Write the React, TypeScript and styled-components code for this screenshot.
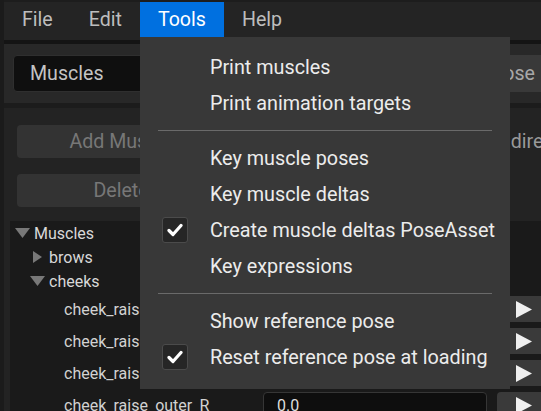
import React from "react";
import styled, { createGlobalStyle } from "styled-components";

const GlobalStyle = createGlobalStyle`
  html, body {
    margin: 0;
    padding: 0;
    background: #1b1b1b;
    overflow: hidden;
  }
  body {
    font-family: Roboto, "Noto Sans", "Liberation Sans", sans-serif;
  }
  * { box-sizing: border-box; }
`;

const Window = styled.div`
  width: 553px;
  height: 411px;
  margin-left: 4px;
  display: flex;
  flex-direction: column;
  background: #232323;
`;

/* ---------- menu bar ---------- */

const MenuBar = styled.div`
  height: 40px;
  display: flex;
  align-items: flex-start;
  border-top: 2px solid #1d1d1d;
  background: #242424;
  position: relative;
  z-index: 10;
`;

const MenuTitle = styled.div<{ $open?: boolean }>`
  position: relative;
  height: 35px;
  padding: 0 18px;
  display: flex;
  align-items: center;
  font-size: 19.6px;
  color: ${(p) => (p.$open ? "#ffffff" : "#bdbdbd")};
  background: ${(p) => (p.$open ? "#0070e0" : "transparent")};
`;

const Dropdown = styled.div`
  position: absolute;
  top: 100%;
  left: 0;
  width: 370px;
  padding: 12px 0 14px;
  background: #383838;
  display: flex;
  flex-direction: column;
`;

const MenuItem = styled.div`
  height: 36px;
  display: flex;
  align-items: center;
  padding-left: 22px;
  font-size: 19.8px;
  color: #ececec;
  white-space: nowrap;
`;

const CheckSlot = styled.div`
  width: 26px;
  height: 26px;
  margin-right: 22px;
  flex: none;
`;

const CheckBox = styled(CheckSlot)`
  border: 1px solid #4b4b4b;
  border-radius: 3px;
  background: #262626;
  display: flex;
  align-items: center;
  justify-content: center;
`;

const MenuSeparator = styled.div`
  height: 19px;
  padding: 9px 18px 0;
  &::after {
    content: "";
    display: block;
    height: 1px;
    background: #6a6a6a;
  }
`;

/* ---------- panel header ---------- */

const Rule = styled.div<{ $h: number; $c: string }>`
  height: ${(p) => p.$h}px;
  background: ${(p) => p.$c};
  flex: none;
`;

const Header = styled.div`
  height: 59px;
  display: flex;
  align-items: center;
  gap: 10px;
  padding: 0 8px 0 9px;
  background: #282828;
`;

const Combo = styled.div`
  flex: 1;
  height: 37px;
  display: flex;
  align-items: center;
  padding-left: 16px;
  border: 1px solid #2f2f2f;
  border-radius: 4px;
  background: #0f0f0f;
  font-size: 19.6px;
  color: #c4c4c4;
`;

const HeaderButton = styled.div`
  height: 37px;
  padding: 0 14px;
  display: flex;
  align-items: center;
  border-radius: 4px;
  background: #393939;
  font-size: 19.6px;
  color: #a8a8a8;
  white-space: nowrap;
`;

/* ---------- actions ---------- */

const Actions = styled.div`
  display: grid;
  grid-template-columns: 208px 1fr;
  column-gap: 16px;
  row-gap: 16px;
  padding: 17px 10px 14px 13px;
`;

const ActionButton = styled.div`
  height: 33px;
  display: flex;
  align-items: center;
  justify-content: center;
  border-radius: 4px;
  background: #333333;
  font-size: 19.6px;
  color: #777777;
`;

const Option = styled.div`
  display: flex;
  align-items: center;
  gap: 10px;
  padding-left: 176px;
  font-size: 19.6px;
  color: #999999;
  white-space: nowrap;
`;

const OptionBox = styled.div`
  width: 26px;
  height: 26px;
  flex: none;
  border: 1px solid #3a3a3a;
  border-radius: 3px;
  background: #1a1a1a;
`;

/* ---------- muscle tree ---------- */

const Tree = styled.div`
  flex: 1;
  margin-left: 6px;
  background: #1a1a1a;
  overflow: hidden;
`;

const TreeRow = styled.div<{ $depth: number }>`
  height: 24px;
  display: flex;
  align-items: center;
  padding-left: ${(p) => 5 + p.$depth * 15}px;
  font-size: 16px;
  color: #d8d8d8;
`;

const Toggle = styled.div`
  width: 15px;
  margin-right: 4px;
  display: flex;
  justify-content: center;
  align-items: center;
`;

const LeafRow = styled.div<{ $depth: number }>`
  height: 32px;
  display: grid;
  grid-template-columns: 189px 224px 54px;
  column-gap: 10px;
  align-items: center;
  padding-left: ${(p) => 5 + p.$depth * 15 + 19}px;
  font-size: 16px;
  color: #d2d2d2;
`;

const LeafLabel = styled.div`
  white-space: nowrap;
  overflow: hidden;
`;

const ValueField = styled.div`
  height: 26px;
  display: flex;
  align-items: center;
  padding-left: 13px;
  border: 1px solid #363636;
  border-radius: 4px;
  background: #0e0e0e;
  color: #dddddd;
`;

const PlayButton = styled.div`
  height: 26px;
  display: flex;
  align-items: center;
  justify-content: center;
  border-radius: 4px;
  background: #3a3a3a;
`;

const Check = () => (
  <svg width="16" height="14" viewBox="0 0 16 14">
    <polyline
      points="2,7.5 6,11.5 14,2.5"
      fill="none"
      stroke="#ffffff"
      strokeWidth="3.2"
      strokeLinecap="round"
      strokeLinejoin="round"
    />
  </svg>
);

const Expanded = () => (
  <svg width="15" height="10" viewBox="0 0 15 10">
    <polygon points="0,0 15,0 7.5,10" fill="#787878" />
  </svg>
);

const Collapsed = () => (
  <svg width="9" height="12" viewBox="0 0 9 12">
    <polygon points="0,0 9,6 0,12" fill="#787878" />
  </svg>
);

const Play = () => (
  <svg width="16" height="17" viewBox="0 0 16 17">
    <polygon points="0,0 16,8.5 0,17" fill="#f0f0f0" />
  </svg>
);

type Entry = { label: string; checked?: boolean } | "sep";

const toolsMenu: Entry[] = [
  { label: "Print muscles" },
  { label: "Print animation targets" },
  "sep",
  { label: "Key muscle poses" },
  { label: "Key muscle deltas" },
  { label: "Create muscle deltas PoseAsset", checked: true },
  { label: "Key expressions" },
  "sep",
  { label: "Show reference pose" },
  { label: "Reset reference pose at loading", checked: true },
];

const cheekMuscles = [
  "cheek_raise_inner_L",
  "cheek_raise_inner_R",
  "cheek_raise_outer_L",
  "cheek_raise_outer_R",
];

export default function App() {
  return (
    <>
      <GlobalStyle />
      <Window>
        <MenuBar>
          <MenuTitle>File</MenuTitle>
          <MenuTitle>Edit</MenuTitle>
          <MenuTitle $open>
            Tools
            <Dropdown>
              {toolsMenu.map((e, i) =>
                e === "sep" ? (
                  <MenuSeparator key={i} />
                ) : (
                  <MenuItem key={i}>
                    {e.checked ? (
                      <CheckBox>
                        <Check />
                      </CheckBox>
                    ) : (
                      <CheckSlot />
                    )}
                    {e.label}
                  </MenuItem>
                )
              )}
            </Dropdown>
          </MenuTitle>
          <MenuTitle>Help</MenuTitle>
        </MenuBar>

        <Rule $h={4} $c="#141414" />
        <Header>
          <Combo>Muscles</Combo>
          <HeaderButton>Reset pose</HeaderButton>
        </Header>
        <Rule $h={5} $c="#1c1c1c" />

        <Actions>
          <ActionButton>Add Muscle</ActionButton>
          <Option>
            <OptionBox />
            Mirror direction
          </Option>
          <ActionButton>Delete</ActionButton>
        </Actions>

        <Tree>
          <TreeRow $depth={0}>
            <Toggle>
              <Expanded />
            </Toggle>
            Muscles
          </TreeRow>
          <TreeRow $depth={1}>
            <Toggle>
              <Collapsed />
            </Toggle>
            brows
          </TreeRow>
          <TreeRow $depth={1}>
            <Toggle>
              <Expanded />
            </Toggle>
            cheeks
          </TreeRow>
          {cheekMuscles.map((name) => (
            <LeafRow key={name} $depth={2}>
              <LeafLabel>{name}</LeafLabel>
              <ValueField>0.0</ValueField>
              <PlayButton>
                <Play />
              </PlayButton>
            </LeafRow>
          ))}
        </Tree>
      </Window>
    </>
  );
}
